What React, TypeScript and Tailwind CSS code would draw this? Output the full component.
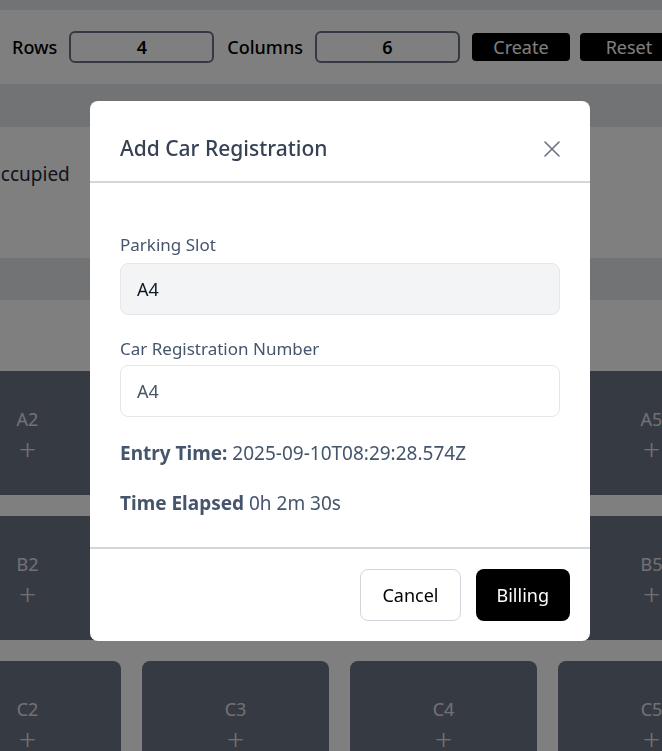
const rows = ["A", "B", "C", "D"];
const cols = [1, 2, 3, 4, 5, 6];

function Slot({ name }: { name: string }) {
  return (
    <div className="h-[124px] rounded-lg bg-[#6c7486] flex flex-col items-center justify-center pt-2 text-white/80">
      <span className="text-lg leading-6">{name}</span>
      <span className="text-3xl leading-[36px] font-light">+</span>
    </div>
  );
}

function CloseIcon() {
  return (
    <svg width="18" height="18" viewBox="0 0 18 18" fill="none" stroke="#6b7280" strokeWidth="1.6" strokeLinecap="round">
      <path d="M2 2L16 16M16 2L2 16" />
    </svg>
  );
}

export default function App() {
  return (
    <div className="relative min-h-screen bg-gray-200 pt-[10px] overflow-hidden font-['Noto_Sans','Open_Sans',sans-serif]">
      <header className="h-[74px] bg-white flex items-center gap-3 pl-3 whitespace-nowrap">
        <span className="text-lg font-medium text-black">Rows</span>
        <div className="w-[145px] h-[32px] shrink-0 border-2 border-gray-500 rounded-md flex items-center justify-center text-lg font-semibold text-black">
          4
        </div>
        <span className="text-lg font-medium text-black ml-px">Columns</span>
        <div className="w-[145px] h-[32px] shrink-0 border-2 border-gray-500 rounded-md flex items-center justify-center text-lg font-semibold text-black">
          6
        </div>
        <button className="w-[98px] h-[28px] shrink-0 bg-black text-white text-lg rounded leading-none">Create</button>
        <button className="w-[98px] h-[28px] shrink-0 -ml-[2px] bg-black text-white text-lg rounded leading-none">Reset</button>
      </header>

      <div className="h-[43px]" />

      <section className="h-[131px] bg-white flex items-start pt-[33px] gap-6 -ml-[138px] whitespace-nowrap">
        <span className="flex items-center gap-2 text-lg text-[#1e293b]">
          <span className="w-4 h-4 bg-green-500 rounded-sm" />
          Available
        </span>
        <span className="flex items-center gap-2 text-[19px] text-[#1e293b]">Occupied</span>
      </section>

      <div className="h-[42px]" />

      <main className="bg-white pt-[71px] pb-10">
        <div className="grid grid-cols-[repeat(6,187px)] gap-[21px] -ml-[274px] w-[1227px]">
          {rows.map((r) => cols.map((c) => <Slot key={r + c} name={r + c} />))}
        </div>
      </main>

      <div className="fixed inset-0 bg-black/50 flex items-start">
        <div className="ml-[90px] mt-[101px] w-[500px] bg-white rounded-lg overflow-hidden">
          <div className="h-[82px] pt-4 px-[30px] flex items-center justify-between border-b-2 border-gray-300">
            <h2 className="text-[21px] font-medium text-gray-700">Add Car Registration</h2>
            <button className="mr-[-1px]">
              <CloseIcon />
            </button>
          </div>

          <div className="px-[30px] pt-[50px] pb-[32px] border-b-2 border-gray-300">
            <label className="block text-[17px] leading-6 text-slate-600 mb-[6px]">Parking Slot</label>
            <div className="h-[52px] rounded-lg bg-gray-100 border border-gray-200 flex items-center px-4 text-lg text-gray-900">
              A4
            </div>
            <label className="block text-[17px] leading-6 text-slate-600 mt-[22px] mb-[4px]">
              Car Registration Number
            </label>
            <div className="h-[52px] rounded-lg bg-white border border-gray-200 flex items-center px-4 text-lg text-slate-600">
              A4
            </div>
            <p className="mt-[24px] text-[19px] leading-6 text-slate-600">
              <span className="font-bold">Entry Time:</span> 2025-09-10T08:29:28.574Z
            </p>
            <p className="mt-[26px] text-[19px] leading-6 text-slate-600">
              <span className="font-bold">Time Elapsed</span> 0h 2m 30s
            </p>
          </div>

          <div className="h-[92px] flex items-center justify-end gap-[15px] pr-[20px]">
            <button className="h-[52px] px-[21px] rounded-lg border border-gray-300 bg-white text-lg text-black">
              Cancel
            </button>
            <button className="h-[52px] px-[21px] rounded-lg bg-black text-lg text-white">Billing</button>
          </div>
        </div>
      </div>
    </div>
  );
}
